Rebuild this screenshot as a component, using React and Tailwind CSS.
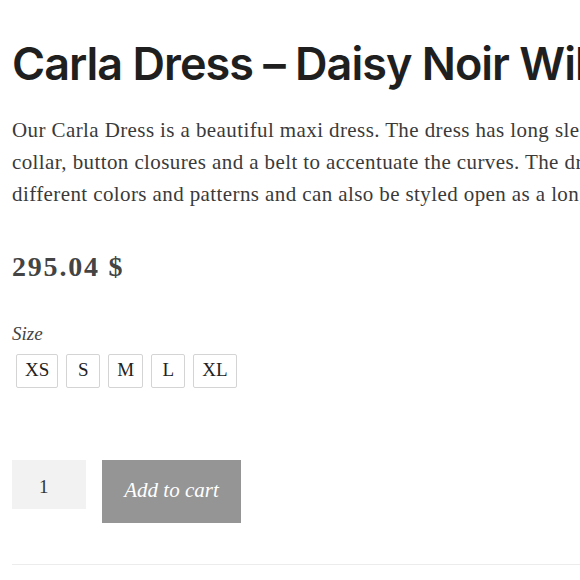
import React from 'react';

const sizes = ['XS', 'S', 'M', 'L', 'XL'];

export default function App() {
  return (
    <div className="w-[580px] h-[580px] overflow-hidden bg-white text-[#222]">
      <div className="pl-[12px] pt-[38px]">
        <h1 className="whitespace-nowrap text-[45px] leading-[52px] font-semibold tracking-[-1px] text-[#1f1f1f] font-['Inter',sans-serif]">
          Carla Dress – Daisy Noir Wild Flower
        </h1>

        <p className="mt-[24px] text-[21px] leading-[32px] tracking-[0.4px] text-[#3a3a3a] font-['Liberation_Serif',serif]">
          <span className="block whitespace-nowrap">Our Carla Dress is a beautiful maxi dress. The dress has long sleeves, a</span>
          <span className="block whitespace-nowrap">collar, button closures and a belt to accentuate the curves. The dress comes in</span>
          <span className="block whitespace-nowrap">different colors and patterns and can also be styled open as a long kimono.</span>
        </p>

        <div className="mt-[41px] text-[28px] leading-[32px] font-bold tracking-[1.8px] text-[#444] font-['Liberation_Serif',serif]">
          295.04 $
        </div>

        <div className="mt-[37px] text-[19px] italic text-[#444] font-['Liberation_Serif',serif]">Size</div>

        <div className="mt-[5px] ml-[4px] flex gap-[8px] font-['Liberation_Serif',serif]">
          {sizes.map((s) => (
            <div
              key={s}
              className="h-[34px] px-[8px] min-w-[34px] flex items-center justify-center border border-[#d4d4d4] rounded-[2px] text-[19px] text-[#222]"
            >
              {s}
            </div>
          ))}
        </div>

        <div className="mt-[72px] flex items-start gap-[16px] font-['Liberation_Serif',serif]">
          <div className="w-[74px] h-[49px] bg-[#f2f2f2] flex items-start pt-[13px] pl-[27px] text-[19px] text-[#333]">
            1
          </div>
          <button className="w-[139px] h-[63px] bg-[#959595] text-white italic text-[21px]">
            Add to cart
          </button>
        </div>

        <div className="mt-[41px] h-px bg-[#ececec] w-full" />
      </div>
    </div>
  );
}
